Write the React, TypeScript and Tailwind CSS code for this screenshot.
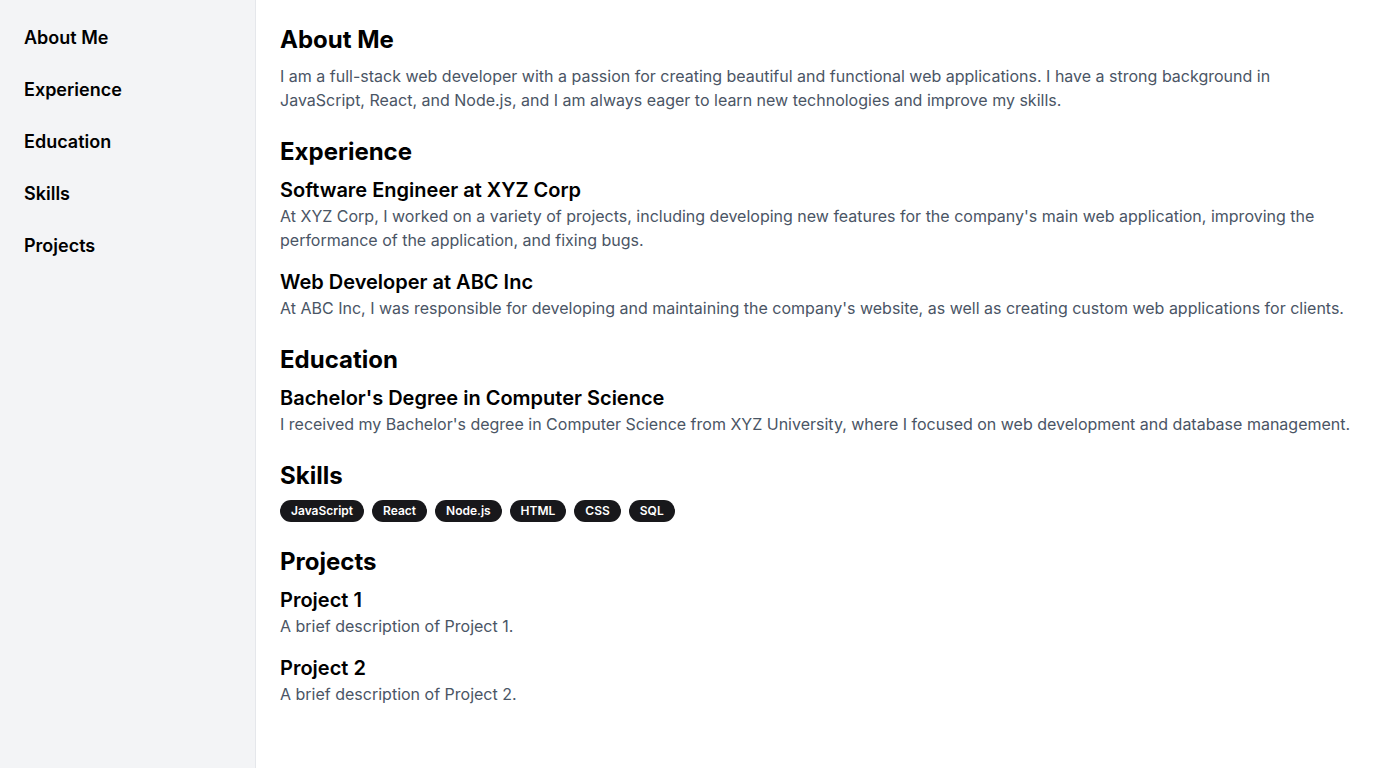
import React from 'react';

const navItems = ['About Me', 'Experience', 'Education', 'Skills', 'Projects'];
const skills = ['JavaScript', 'React', 'Node.js', 'HTML', 'CSS', 'SQL'];

const Item: React.FC<{ title: string; children: React.ReactNode }> = ({ title, children }) => (
  <div>
    <h3 className="text-xl font-semibold text-black">{title}</h3>
    <p className="text-gray-600">{children}</p>
  </div>
);

export default function App() {
  return (
    <div className="flex min-h-screen w-full bg-white" style={{ fontFamily: 'Inter, "Liberation Sans", sans-serif' }}>
      {/* Sidebar */}
      <aside className="w-64 shrink-0 bg-gray-100 border-r border-gray-200 p-6">
        <nav className="flex flex-col gap-6">
          {navItems.map((item) => (
            <a key={item} href="#" className="text-lg font-semibold text-black">
              {item}
            </a>
          ))}
        </nav>
      </aside>

      {/* Content */}
      <main className="flex-1 p-6 flex flex-col gap-6">
        <section>
          <h2 className="text-2xl font-bold mb-2 text-black">About Me</h2>
          <p className="text-gray-600">
            I am a full-stack web developer with a passion for creating beautiful and functional web applications. I have a strong background in JavaScript, React, and Node.js, and I am always eager to learn new technologies and improve my skills.
          </p>
        </section>

        <section>
          <h2 className="text-2xl font-bold mb-2 text-black">Experience</h2>
          <div className="flex flex-col gap-4">
            <Item title="Software Engineer at XYZ Corp">
              At XYZ Corp, I worked on a variety of projects, including developing new features for the company's main web application, improving the performance of the application, and fixing bugs.
            </Item>
            <Item title="Web Developer at ABC Inc">
              At ABC Inc, I was responsible for developing and maintaining the company's website, as well as creating custom web applications for clients.
            </Item>
          </div>
        </section>

        <section>
          <h2 className="text-2xl font-bold mb-2 text-black">Education</h2>
          <Item title="Bachelor's Degree in Computer Science">
            I received my Bachelor's degree in Computer Science from XYZ University, where I focused on web development and database management.
          </Item>
        </section>

        <section>
          <h2 className="text-2xl font-bold mb-2 text-black">Skills</h2>
          <div className="flex flex-wrap gap-2">
            {skills.map((s) => (
              <span
                key={s}
                className="inline-flex items-center rounded-full border border-transparent bg-zinc-900 px-2.5 py-0.5 text-xs font-semibold text-white"
              >
                {s}
              </span>
            ))}
          </div>
        </section>

        <section>
          <h2 className="text-2xl font-bold mb-2 text-black">Projects</h2>
          <div className="flex flex-col gap-4">
            <Item title="Project 1">A brief description of Project 1.</Item>
            <Item title="Project 2">A brief description of Project 2.</Item>
          </div>
        </section>
      </main>
    </div>
  );
}
